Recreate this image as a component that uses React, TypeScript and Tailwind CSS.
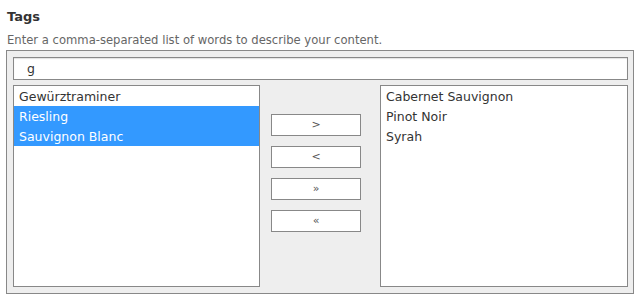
import React from "react";

const left = [
  { t: "Gewürztraminer", s: false },
  { t: "Riesling", s: true },
  { t: "Sauvignon Blanc", s: true },
];
const right = ["Cabernet Sauvignon", "Pinot Noir", "Syrah"];
const buttons = [">", "<", "»", "«"];

export default function App() {
  return (
    <div
      className="w-[644px] h-[304px] bg-white pl-[6px] pt-[8px] text-[#333]"
      style={{ fontFamily: '"DejaVu Sans", Verdana, sans-serif' }}
    >
      <div className="pl-px text-[13px] font-bold leading-[17px] text-[#333]">Tags</div>
      <div className="pl-px mt-[8px] text-[11.6px] leading-[14px] text-[#666]">
        Enter a comma-separated list of words to describe your content.
      </div>
      <div className="mt-[3px] w-[628px] h-[244px] border border-[#888] bg-[#eeeeee] pl-[6px] pr-[5px] pt-[6px]">
        <div className="h-[23px] border border-[#888] bg-white shadow-[inset_0_1px_1px_rgba(0,0,0,0.12)] pl-[13px] text-[12.5px] leading-[21px] text-[#333]">
          g
        </div>
        <div className="mt-[5px] flex h-[202px]">
          <div className="w-[247px] h-full border border-[#888] bg-white text-[12.5px]">
            {left.map((i) => (
              <div
                key={i.t}
                className={
                  i.s
                    ? "h-[20px] leading-[21px] pl-[5px] bg-[#3399ff] text-white"
                    : "h-[20px] leading-[21px] pl-[5px] text-[#333]"
                }
              >
                {i.t}
              </div>
            ))}
          </div>
          <div className="flex-1 flex flex-col gap-[10px] pt-[29px] pl-[11px] pr-[19px]">
            {buttons.map((b) => (
              <div
                key={b}
                className="h-[22px] border border-[#888] bg-white flex items-center justify-center text-[11px] text-[#555]"
              >
                {b}
              </div>
            ))}
          </div>
          <div className="w-[248px] h-full border border-[#888] bg-white text-[12.5px]">
            {right.map((t) => (
              <div key={t} className="h-[20px] leading-[21px] pl-[5px] text-[#333]">
                {t}
              </div>
            ))}
          </div>
        </div>
      </div>
    </div>
  );
}
